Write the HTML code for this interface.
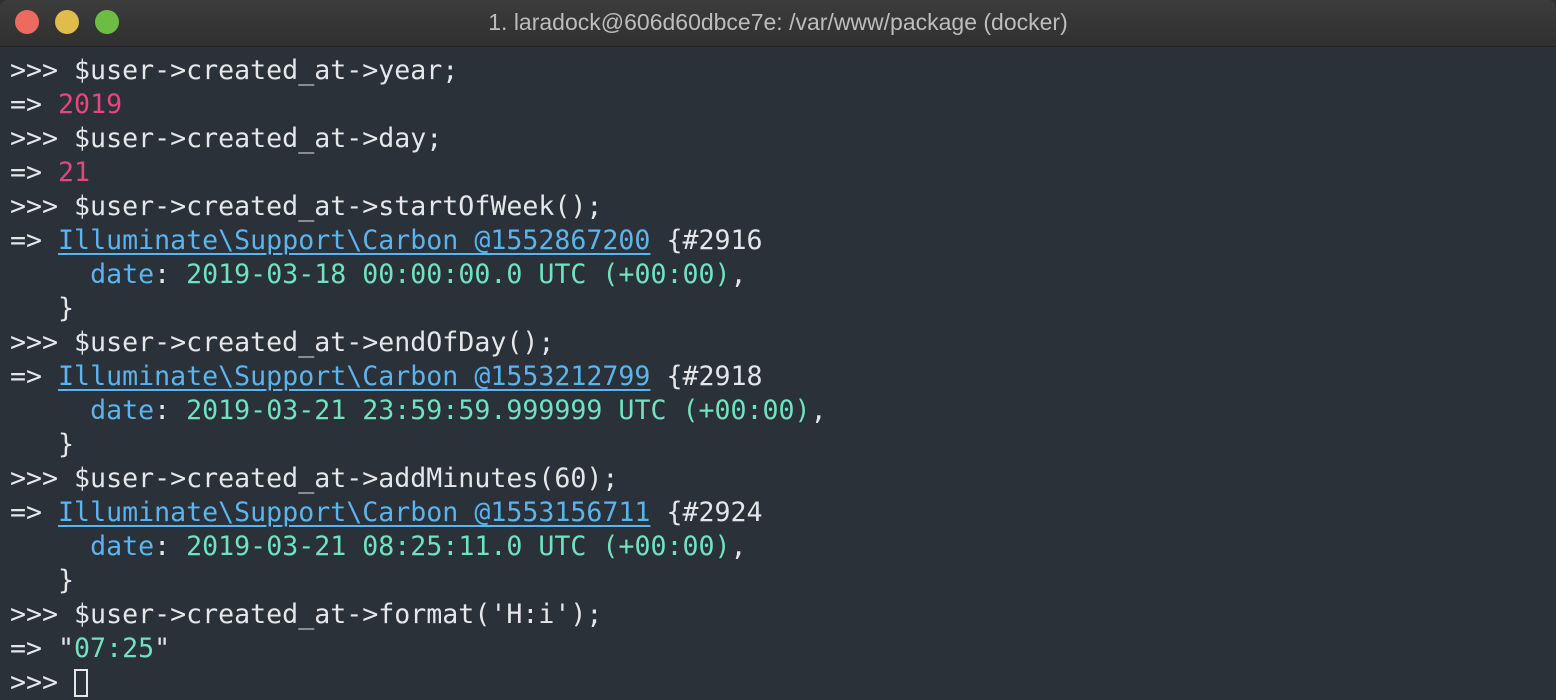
<!DOCTYPE html>
<html><head><style>
html,body{margin:0;padding:0;width:1556px;height:700px;overflow:hidden;background:#2b3138;}
.tb{position:absolute;left:0;top:0;width:1556px;height:46px;background:linear-gradient(#3c3c3c,#303030);border-bottom:1px solid #222;border-radius:8px 8px 0 0;}
.c{position:absolute;top:10px;width:24px;height:24px;border-radius:50%;}
.tt{position:absolute;left:0;right:0;top:9px;text-align:center;color:#bdbdbd;font:23px "Liberation Sans",sans-serif;}
.t{position:absolute;left:10px;top:54px;font-family:"DejaVu Sans Mono",monospace;font-size:26.6px;line-height:34px;color:#e4e6e8;white-space:pre;}
.p{color:#e8457d}.b{color:#5bb4ee}.g{color:#6fe3bd}
.u{color:#5bb4ee;text-decoration:underline;text-underline-offset:4px;text-decoration-thickness:2px}
.cur{display:inline-block;width:14px;height:28px;border:2px solid #e4e6e8;box-sizing:border-box;vertical-align:-6px;}
</style></head><body>
<div class="tb">
<div class="c" style="left:15px;background:#ed6a5e"></div>
<div class="c" style="left:55px;background:#e0bd4a"></div>
<div class="c" style="left:95px;background:#6dbd45"></div>
<div class="tt">1. laradock@606d60dbce7e: /var/www/package (docker)</div>
</div>
<div class="t">&gt;&gt;&gt; $user-&gt;created_at-&gt;year;
=&gt; <span class="p">2019</span>
&gt;&gt;&gt; $user-&gt;created_at-&gt;day;
=&gt; <span class="p">21</span>
&gt;&gt;&gt; $user-&gt;created_at-&gt;startOfWeek();
=&gt; <span class="u">Illuminate\Support\Carbon @1552867200</span> {#2916
     <span class="b">date</span>: <span class="g">2019-03-18 00:00:00.0 UTC (+00:00)</span>,
   }
&gt;&gt;&gt; $user-&gt;created_at-&gt;endOfDay();
=&gt; <span class="u">Illuminate\Support\Carbon @1553212799</span> {#2918
     <span class="b">date</span>: <span class="g">2019-03-21 23:59:59.999999 UTC (+00:00)</span>,
   }
&gt;&gt;&gt; $user-&gt;created_at-&gt;addMinutes(60);
=&gt; <span class="u">Illuminate\Support\Carbon @1553156711</span> {#2924
     <span class="b">date</span>: <span class="g">2019-03-21 08:25:11.0 UTC (+00:00)</span>,
   }
&gt;&gt;&gt; $user-&gt;created_at-&gt;format('H:i');
=&gt; "<span class="g">07:25</span>"
&gt;&gt;&gt; <span class="cur"></span></div>
</body></html>
